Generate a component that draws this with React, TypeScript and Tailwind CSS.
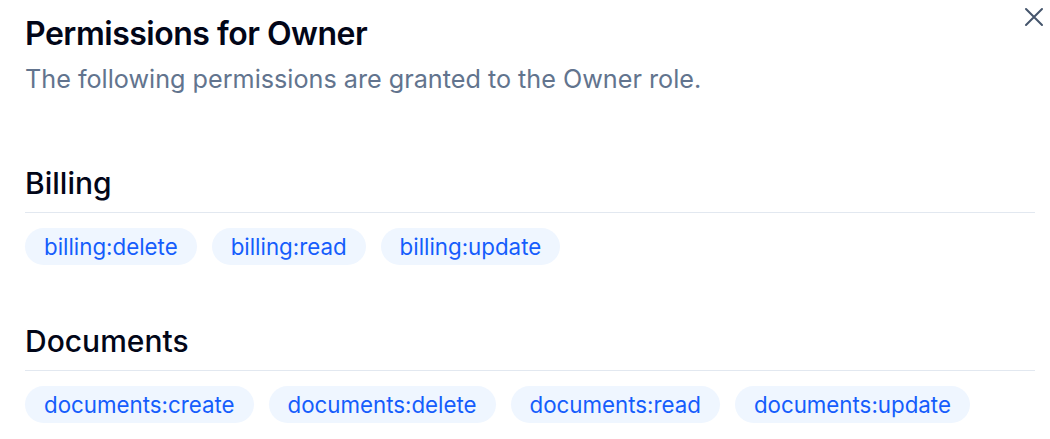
import React from 'react';

const groups = [
  { name: 'Billing', perms: ['billing:delete', 'billing:read', 'billing:update'] },
  { name: 'Documents', perms: ['documents:create', 'documents:delete', 'documents:read', 'documents:update'] },
];

const App: React.FC = () => {
  return (
    <div className="relative w-[1050px] h-[439px] bg-white overflow-hidden pl-[25px] pr-[15px] pt-[14px]" style={{ fontFamily: 'Inter, "Noto Sans", sans-serif' }}>
      {/* Close */}
      <button className="absolute left-[1024px] top-[7px] w-[20px] h-[20px] text-slate-600">
        <svg viewBox="0 0 20 20" className="w-[20px] h-[20px]" fill="none" stroke="currentColor" strokeWidth={2} strokeLinecap="round">
          <path d="M2 2 L18 18 M18 2 L2 18" />
        </svg>
      </button>

      {/* Header */}
      <h2 className="text-[32px] leading-[40px] font-semibold tracking-[-0.015em] text-slate-950">Permissions for Owner</h2>
      <p className="mt-[9px] text-[25.2px] leading-[32px] text-slate-500">The following permissions are granted to the Owner role.</p>

      {/* Groups */}
      <div className="mt-[70px] flex flex-col gap-[58px]">
        {groups.map((g) => (
          <div key={g.name}>
            <h3 className="text-[30px] leading-[36px] font-medium text-slate-950 pb-[11px] border-b border-slate-200">{g.name}</h3>
            <div className="mt-[15px] flex flex-wrap gap-[15px]">
              {g.perms.map((p) => (
                <span key={p} className="h-[37px] px-[19px] flex items-center rounded-full bg-blue-50 text-blue-600 text-[22.3px]">
                  {p}
                </span>
              ))}
            </div>
          </div>
        ))}
      </div>
    </div>
  );
};

export default App;
